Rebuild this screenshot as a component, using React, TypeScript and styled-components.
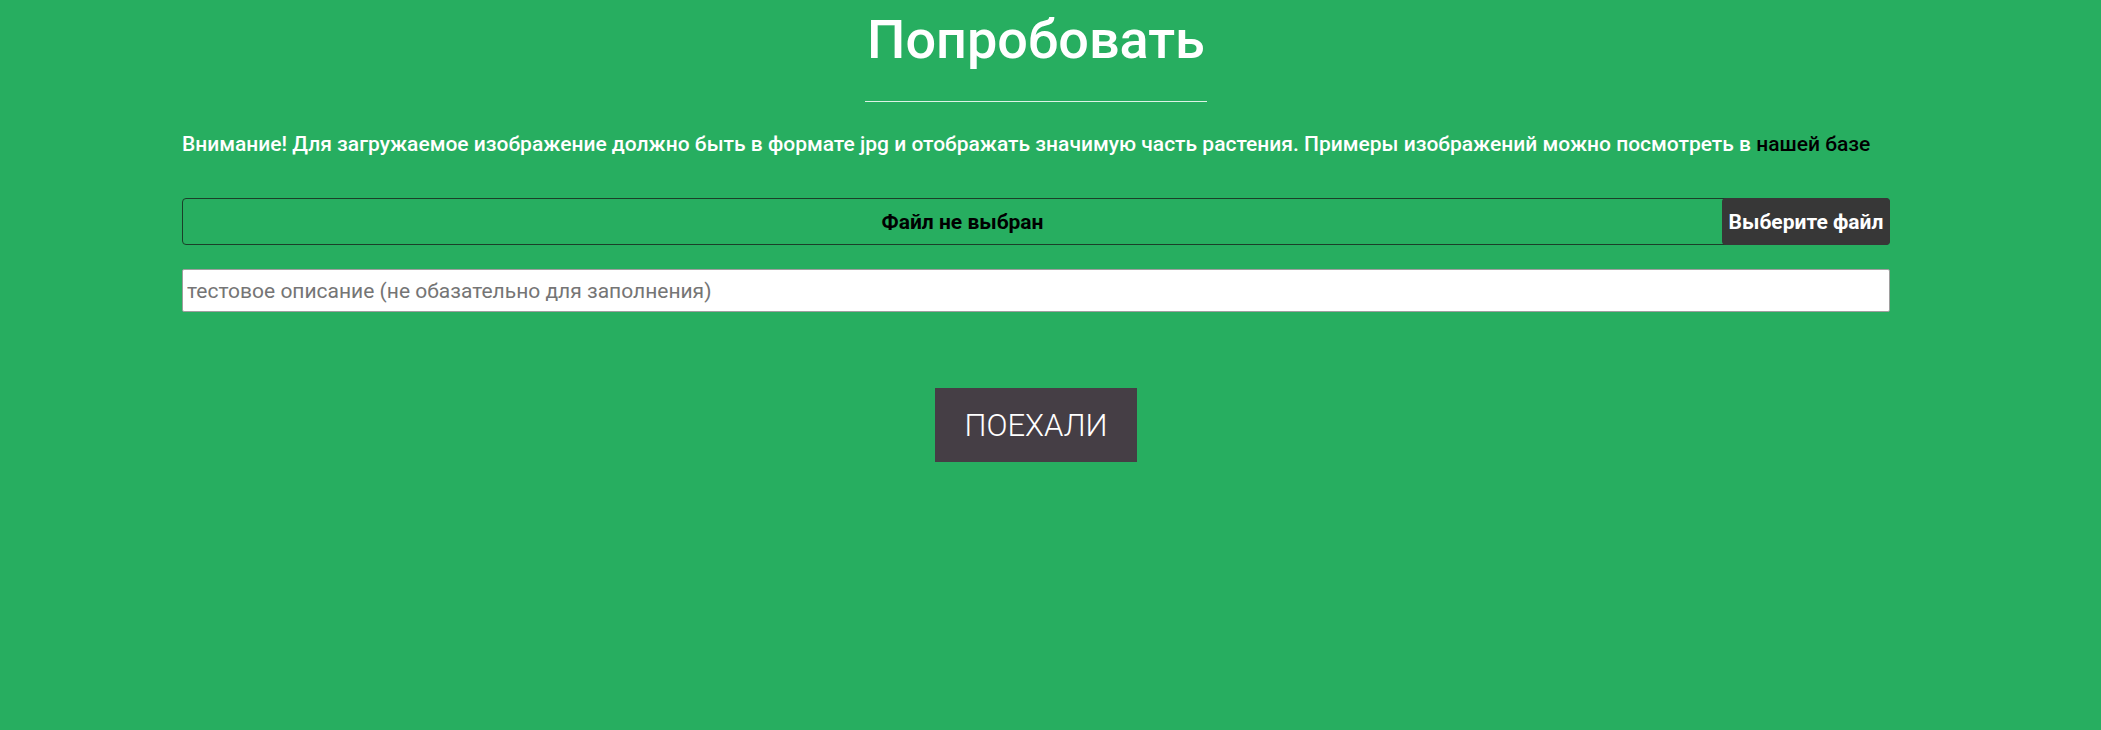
import React from "react";
import styled, { createGlobalStyle } from "styled-components";

const Global = createGlobalStyle`
  html, body {
    margin: 0;
    padding: 0;
    background: #27ae60;
  }
  body {
    font-family: Roboto, "Liberation Sans", sans-serif;
    color: #fff;
  }
`;

const Page = styled.div`
  min-height: 730px;
  padding-top: 8px;
  box-sizing: border-box;
`;

const Column = styled.section`
  width: 1708px;
  margin-left: 182px;
  display: flex;
  flex-direction: column;
  align-items: center;
`;

const Title = styled.h1`
  margin: 0;
  font-size: 54px;
  font-weight: 500;
  line-height: 63px;
  color: #fff;
`;

const Divider = styled.hr`
  width: 342px;
  height: 1px;
  border: 0;
  background: rgba(255, 255, 255, 0.85);
  margin: 30px 0 0 0;
`;

const Notice = styled.p`
  align-self: stretch;
  margin: 30px 0 0 0;
  font-size: 21px;
  font-weight: 500;
  line-height: 25px;
  color: #fff;
`;

const BaseLink = styled.a`
  color: #000;
  text-decoration: none;
`;

const FileField = styled.label`
  align-self: stretch;
  margin-top: 41px;
  height: 47px;
  box-sizing: border-box;
  border: 1px solid #1b3f29;
  border-radius: 4px;
  display: flex;
  align-items: stretch;
  cursor: pointer;
`;

const HiddenInput = styled.input`
  display: none;
`;

const FileName = styled.span`
  flex: 1;
  display: flex;
  align-items: center;
  justify-content: center;
  padding-left: 20px;
  font-size: 21px;
  font-weight: 700;
  color: #000;
`;

const FileButton = styled.span`
  width: 168px;
  margin: -1px -1px -1px 0;
  background: #373737;
  border-radius: 4px;
  display: flex;
  align-items: center;
  justify-content: center;
  font-size: 21px;
  font-weight: 700;
  color: #fff;
`;

const TextInput = styled.input`
  align-self: stretch;
  margin-top: 24px;
  height: 43px;
  box-sizing: border-box;
  border: 1px solid #9e9e9e;
  border-radius: 2px;
  background: #fff;
  padding: 0 4px;
  font-family: Roboto, "Liberation Sans", sans-serif;
  font-size: 21px;
  color: #333;
  &::placeholder {
    color: #757575;
  }
`;

const GoButton = styled.button`
  margin-top: 76px;
  width: 202px;
  height: 74px;
  border: 0;
  background: #453e45;
  color: #fff;
  font-family: Roboto, "Liberation Sans", sans-serif;
  font-size: 31px;
  font-weight: 300;
  cursor: pointer;
`;

export default function App() {
  return (
    <>
      <Global />
      <Page>
        <Column>
          <Title>Попробовать</Title>
          <Divider />
          <Notice>
            Внимание! Для загружаемое изображение должно быть в формате jpg и
            отображать значимую часть растения. Примеры изображений можно
            посмотреть в <BaseLink href="#">нашей базе</BaseLink>
          </Notice>
          <FileField>
            <HiddenInput type="file" accept=".jpg" />
            <FileName>Файл не выбран</FileName>
            <FileButton>Выберите файл</FileButton>
          </FileField>
          <TextInput
            type="text"
            placeholder="тестовое описание (не обазательно для заполнения)"
          />
          <GoButton type="button">ПОЕХАЛИ</GoButton>
        </Column>
      </Page>
    </>
  );
}
